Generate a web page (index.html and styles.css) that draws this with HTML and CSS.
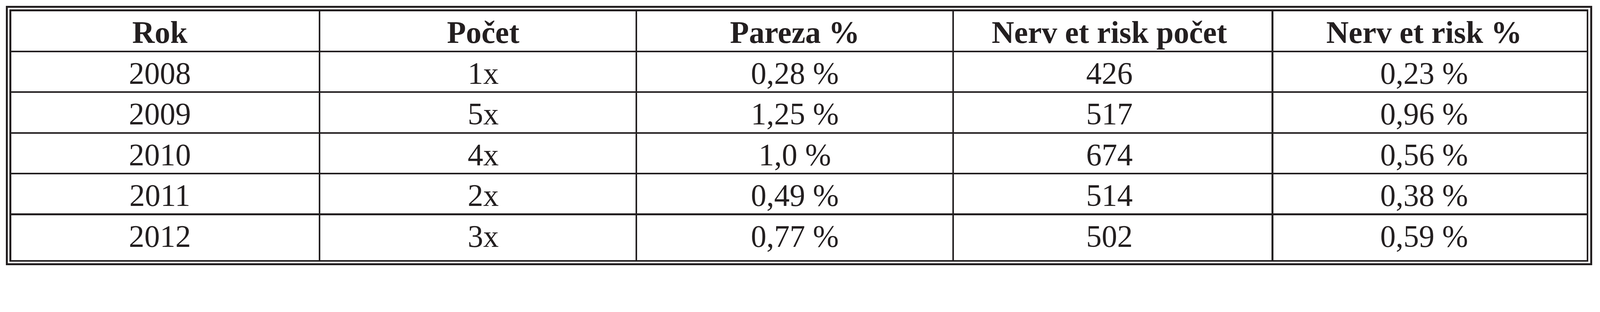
FILE: index.html
```html
<!DOCTYPE html>
<html lang="cs">
<head>
<meta charset="utf-8">
<title>Tabulka</title>
<link rel="stylesheet" href="styles.css">
</head>
<body>
<div class="frame">
  <div class="grid" role="table">
    <div class="cell head c1">Rok</div>
    <div class="cell head c2">Počet</div>
    <div class="cell head c3">Pareza %</div>
    <div class="cell head c4">Nerv et risk počet</div>
    <div class="cell head c5">Nerv et risk %</div>

    <div class="cell c1">2008</div>
    <div class="cell c2">1x</div>
    <div class="cell c3">0,28 %</div>
    <div class="cell c4">426</div>
    <div class="cell c5">0,23 %</div>

    <div class="cell c1">2009</div>
    <div class="cell c2">5x</div>
    <div class="cell c3">1,25 %</div>
    <div class="cell c4">517</div>
    <div class="cell c5">0,96 %</div>

    <div class="cell c1">2010</div>
    <div class="cell c2">4x</div>
    <div class="cell c3">1,0 %</div>
    <div class="cell c4">674</div>
    <div class="cell c5">0,56 %</div>

    <div class="cell c1">2011</div>
    <div class="cell c2">2x</div>
    <div class="cell c3">0,49 %</div>
    <div class="cell c4">514</div>
    <div class="cell c5">0,38 %</div>

    <div class="cell c1">2012</div>
    <div class="cell c2">3x</div>
    <div class="cell c3">0,77 %</div>
    <div class="cell c4">502</div>
    <div class="cell c5">0,59 %</div>
  </div>
</div>
</body>
</html>
```

FILE: styles.css
```css
:root {
  --u: calc(100vw / 4637);
  --ink: #231f20;
}

html, body {
  margin: 0;
  padding: 0;
  background: #ffffff;
  overflow: hidden;
}

body {
  font-family: "Liberation Serif", "Times New Roman", serif;
  color: var(--ink);
}

.frame {
  margin: calc(17 * var(--u)) 0 0 calc(17 * var(--u));
  width: calc(4597 * var(--u));
  box-sizing: border-box;
  border: calc(6 * var(--u)) solid var(--ink);
  padding: calc(5 * var(--u));
  background: #ffffff;
}

.grid {
  display: grid;
  grid-template-columns: 891fr 913fr 913fr 920fr 908fr;
  grid-template-rows:
    calc(114 * var(--u)) calc(113 * var(--u)) calc(114 * var(--u))
    calc(113 * var(--u)) calc(113 * var(--u)) calc(130 * var(--u));
  gap: calc(5 * var(--u));
  padding: calc(5 * var(--u));
  background: var(--ink);
}

.cell {
  background: #ffffff;
  display: flex;
  justify-content: center;
  align-items: flex-start;
  padding-top: calc(10 * var(--u));
  box-sizing: border-box;
  font-size: calc(90 * var(--u));
  line-height: normal;
  white-space: nowrap;
  min-width: 0;
}

.head {
  font-weight: bold;
}

.c1 { padding-right: calc(30 * var(--u)); }
.c2 { padding-left: calc(30 * var(--u)); }
.c4 { padding-right: calc(20 * var(--u)); }
.c5 { padding-right: calc(34 * var(--u)); }
```
